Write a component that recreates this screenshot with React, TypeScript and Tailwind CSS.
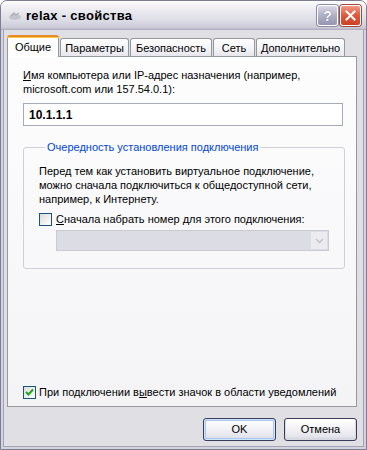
import type { ReactNode } from 'react'

// XP "Silver" connection properties dialog.

function TitleIcon() {
  return (
    <svg width="14" height="10" viewBox="0 0 14 10" aria-hidden="true">
      <ellipse cx="7" cy="6" rx="6" ry="3" fill="#c4c4cc" />
      <path d="M3 5 L6 2 L8 4 L11 2" stroke="#b0b0ba" strokeWidth="1.5" fill="none" />
    </svg>
  )
}

function CaptionButton({ kind }: { kind: 'help' | 'close' }) {
  if (kind === 'help') {
    return (
      <div className="w-[21px] h-[21px] rounded-[3px] border border-white bg-[linear-gradient(to_bottom,#d8d8e6,#b0b0c6_50%,#9696b2)] shadow-[0_0_0_1px_#8c8ca4] flex items-center justify-center">
        <span className="text-[14px] font-bold leading-none text-white [text-shadow:0_0_1px_#55556e] font-['Liberation_Sans',sans-serif]">?</span>
      </div>
    )
  }
  return (
    <div className="w-[21px] h-[21px] rounded-[3px] border border-white bg-[linear-gradient(to_bottom,#f09a86,#e0583c_50%,#cc4228)] shadow-[0_0_0_1px_#a04a3c] flex items-center justify-center">
      <svg width="11" height="11" viewBox="0 0 11 11" aria-hidden="true">
        <path d="M1.5 1.5 L9.5 9.5 M9.5 1.5 L1.5 9.5" stroke="#ffffff" strokeWidth="2" strokeLinecap="square" />
      </svg>
    </div>
  )
}

function Tab({ label, width, active }: { label: string; width: number; active?: boolean }) {
  if (active) {
    return (
      <div
        className="relative z-10 -mb-px h-[21px] flex items-start justify-center rounded-t-[3px] border-x border-[#919b9c] bg-white"
        style={{ width }}
      >
        <div className="absolute -top-px -left-px -right-px h-[3px] rounded-t-[3px] bg-[#e68b2c] border-b border-[#ffc73c]" />
        <span className="pt-[4px] text-[11px] leading-[14px]">{label}</span>
      </div>
    )
  }
  return (
    <div
      className="h-[18px] ml-px flex items-start justify-center rounded-t-[3px] border border-b-0 border-[#919b9c] bg-[linear-gradient(to_bottom,#ffffff,#f3f3f7_60%,#e6e6ec)]"
      style={{ width }}
    >
      <span className="pt-[2px] text-[11px] leading-[14px]">{label}</span>
    </div>
  )
}

function Checkbox({ checked }: { checked?: boolean }) {
  return (
    <div className="w-[13px] h-[13px] shrink-0 border border-[#1c5180] bg-[linear-gradient(135deg,#dcdcd7,#ffffff)] flex items-center justify-center">
      {checked && (
        <svg width="9" height="9" viewBox="0 0 9 9" aria-hidden="true">
          <path d="M1 4 L3.5 6.5 L8 1.5" stroke="#21a121" strokeWidth="2" fill="none" />
        </svg>
      )}
    </div>
  )
}

function Button({ children, isDefault }: { children: ReactNode; isDefault?: boolean }) {
  return (
    <div
      className={[
        'w-[73px] h-[23px] rounded-[3px] border border-[#3c3c5a] flex items-center justify-center text-[11px]',
        'bg-[linear-gradient(to_bottom,#ffffff,#f4f4f7_40%,#e4e4ec_85%,#cfcfdc)]',
        isDefault ? 'shadow-[inset_0_0_0_1px_#cee7ff,inset_0_0_0_2px_#aac8ee]' : 'shadow-[inset_0_-1px_0_1px_#d8d8e2]',
      ].join(' ')}
    >
      {children}
    </div>
  )
}

export default function App() {
  return (
    <div className="w-[367px] h-[450px] font-['Liberation_Sans',Arial,sans-serif] text-black">
      <div className="w-[367px] h-[450px] flex flex-col rounded-t-[7px] border border-[#7c7c92] bg-[#e0dfe3] overflow-hidden">
        {/* title bar */}
        <div className="h-[29px] shrink-0 flex items-center pl-[7px] pr-[5px] bg-[linear-gradient(to_bottom,#fdfdfe,#eeeef3_25%,#dddde6_65%,#cbcbd8_92%,#a9a9bc)]">
          <TitleIcon />
          <span className="ml-[4px] text-[13px] font-bold tracking-[0.3px]">relax - свойства</span>
          <div className="ml-auto flex gap-[2px]">
            <CaptionButton kind="help" />
            <CaptionButton kind="close" />
          </div>
        </div>

        {/* frame + body */}
        <div className="flex-1 flex flex-col border-x-[2px] border-b-[2px] border-[#d3d3de]">
          <div className="flex-1 flex flex-col border-x border-b border-[#a3a3b8] pl-[3px] pr-[6px] pt-[6px]">
            <div className="h-[20px] flex items-end">
              <Tab label="Общие" width={52} active />
              <Tab label="Параметры" width={69} />
              <Tab label="Безопасность" width={82} />
              <Tab label="Сеть" width={42} />
              <Tab label="Дополнительно" width={89} />
            </div>

            <div className="h-[351px] flex flex-col border border-[#919b9c] bg-[linear-gradient(to_bottom,#fdfdfe,#f4f4f6)] px-[15px] pt-[11px] text-[11px] leading-[14px]">
              <div>
                <span className="underline">И</span>мя компьютера или IP-адрес назначения (например,
                <br />
                microsoft.com или 157.54.0.1):
              </div>
              <div className="mt-[7px] w-[320px] h-[23px] border border-[#a5acb5] bg-white flex items-center px-[5px] text-[12px] font-bold">
                10.1.1.1
              </div>

              <fieldset className="mt-[14px] w-[320px] h-[129px] rounded-[3px] border border-[#d0d0d8] px-[15px]">
                <legend className="ml-[6px] px-[2px] text-[#0046d5]">Очередность установления подключения</legend>
                <div className="mt-[10px]">
                  Перед тем как установить виртуальное подключение,
                  <br />
                  можно сначала подключиться к общедоступной сети,
                  <br />
                  например, к Интернету.
                </div>
                <div className="mt-[6px] flex items-center gap-[4px]">
                  <Checkbox />
                  <span>
                    <span className="underline">С</span>начала набрать номер для этого подключения:
                  </span>
                </div>
                <div className="mt-[4px] ml-[17px] w-[273px] h-[21px] border border-[#cacad2] bg-[#dcdce4] flex justify-end p-px">
                  <div className="w-[16px] h-full bg-[#ececf0] flex items-center justify-center">
                    <svg width="9" height="6" viewBox="0 0 9 6" aria-hidden="true">
                      <path d="M1 1 L4.5 4.5 L8 1" stroke="#c4c4cc" strokeWidth="1.6" fill="none" />
                    </svg>
                  </div>
                </div>
              </fieldset>

              <div className="mt-auto mb-[7px] flex items-center gap-[3px]">
                <Checkbox checked />
                <span>
                  При подключении в<span className="underline">ы</span>вести значок в области уведомлений
                </span>
              </div>
            </div>

            <div className="mt-[11px] flex justify-end gap-[8px]">
              <Button isDefault>OK</Button>
              <Button>Отмена</Button>
            </div>
          </div>
        </div>
      </div>
    </div>
  )
}
